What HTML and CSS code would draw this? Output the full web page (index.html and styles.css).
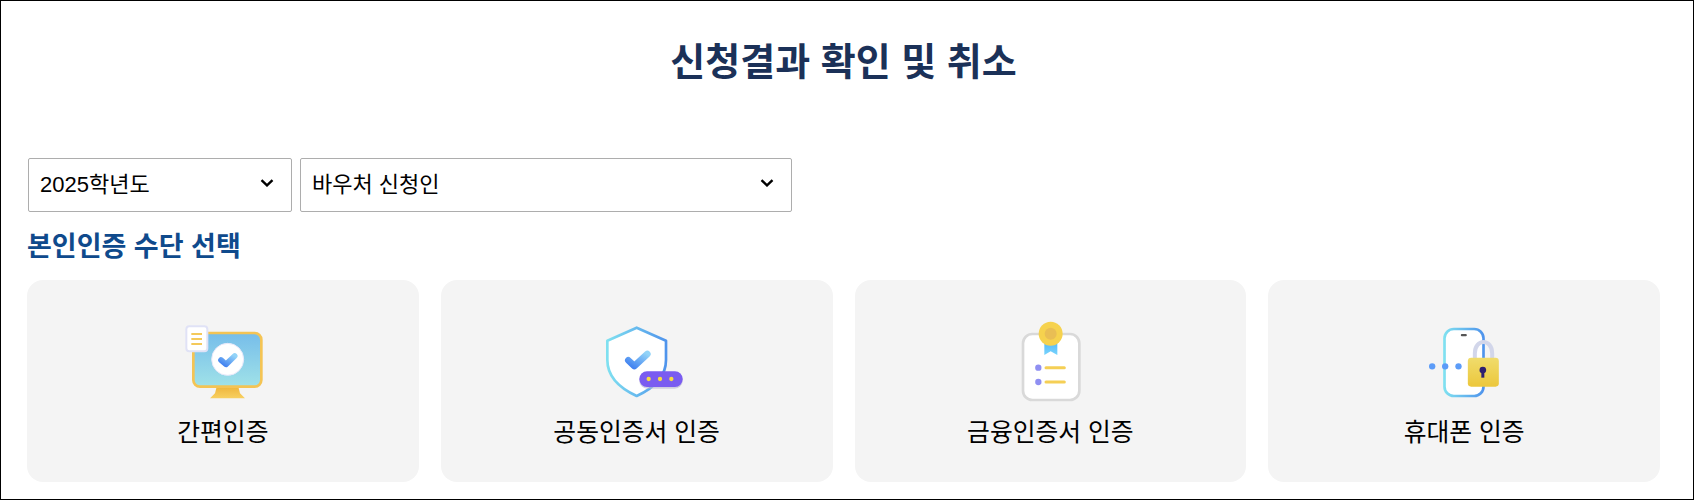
FILE: index.html
```html
<!DOCTYPE html>
<html lang="ko">
<head>
<meta charset="utf-8">
<title>신청결과 확인 및 취소</title>
<link rel="stylesheet" href="styles.css">
</head>
<body>
<main class="page">
  <h1 class="title">신청결과 확인 및 취소</h1>
  <div class="filters">
    <div class="field field-year">
      <select class="select"><option>2025학년도</option></select>
      <svg class="chevron" width="14" height="8" viewBox="0 0 14 8"><path d="M1.5 1.2L7 6.4L12.5 1.2" fill="none" stroke="#000" stroke-width="2.4"/></svg>
    </div>
    <div class="field field-role">
      <select class="select"><option>바우처 신청인</option></select>
      <svg class="chevron" width="14" height="8" viewBox="0 0 14 8"><path d="M1.5 1.2L7 6.4L12.5 1.2" fill="none" stroke="#000" stroke-width="2.4"/></svg>
    </div>
  </div>
  <h2 class="subtitle">본인인증 수단 선택</h2>
  <svg class="defs" width="0" height="0" aria-hidden="true">
    <defs>
      <linearGradient id="screen" x1="0" y1="0" x2="0" y2="1"><stop offset="0" stop-color="#76bdea"/><stop offset="1" stop-color="#a0e2e8"/></linearGradient>
      <linearGradient id="stand" x1="0" y1="0" x2="0" y2="1"><stop offset="0" stop-color="#eeb53c"/><stop offset="1" stop-color="#f8d060"/></linearGradient>
      <linearGradient id="check" x1="0" y1="1" x2="1" y2="0"><stop offset="0" stop-color="#3f7ff0"/><stop offset="1" stop-color="#93d4f8"/></linearGradient>
      <linearGradient id="edge" x1="0" y1="0" x2="1" y2="0"><stop offset="0" stop-color="#7fe0f0"/><stop offset="1" stop-color="#4f94ec"/></linearGradient>
      <linearGradient id="padlock" x1="0" y1="0" x2="0" y2="1"><stop offset="0" stop-color="#f0dc6c"/><stop offset="1" stop-color="#ecc73c"/></linearGradient>
      <linearGradient id="ribbon" x1="0" y1="0" x2="0" y2="1"><stop offset="0" stop-color="#4fb4fa"/><stop offset="1" stop-color="#78d4fc"/></linearGradient>
    </defs>
  </svg>
  <div class="methods">
    <a class="method">
      <svg class="icon" width="120" height="100" viewBox="9 0 360 300">
        <path d="M170 230H235L240 250L255 265H150L165 250Z" fill="url(#stand)"/>
        <rect x="100" y="69" width="204" height="161" rx="20" fill="url(#screen)" stroke="#f4c454" stroke-width="8"/>
        <circle cx="203" cy="148" r="48" fill="#fff" stroke="#e8e8fa" stroke-width="3"/>
        <path d="M183 150L198 163L224 138" fill="none" stroke="url(#check)" stroke-width="17" stroke-linecap="round" stroke-linejoin="round"/>
        <rect x="79" y="49" width="63" height="75" rx="9" fill="#fff" stroke="#e0e2f6" stroke-width="6"/>
        <path d="M94 72H126M94 87H126M94 102H126" stroke="#f4c95a" stroke-width="6"/>
      </svg>
      <span class="label">간편인증</span>
    </a>
    <a class="method">
      <svg class="icon" width="120" height="100" viewBox="-39 0 360 300">
        <path d="M140 53L228 92V150C228 200 190 235 140 258C90 235 52 200 52 150V92Z" fill="#fff" stroke="url(#edge)" stroke-width="8" stroke-linejoin="round"/>
        <path d="M115 151L133 168L172 132" fill="none" stroke="url(#check)" stroke-width="20" stroke-linecap="round" stroke-linejoin="round"/>
        <rect x="148" y="188" width="130" height="48" rx="24" fill="#b8b4d0" opacity=".6"/>
        <rect x="148" y="184" width="130" height="47" rx="23" fill="#7a5cf0"/>
        <circle cx="176" cy="207" r="6.5" fill="#f8dc40"/><circle cx="210" cy="207" r="6.5" fill="#f8dc40"/><circle cx="244" cy="207" r="6.5" fill="#f8dc40"/>
      </svg>
      <span class="label">공동인증서 인증</span>
    </a>
    <a class="method">
      <svg class="icon" width="120" height="100" viewBox="-27 0 360 300">
        <rect x="72" y="72" width="169" height="198" rx="28" fill="#fff" stroke="#d9d9d9" stroke-width="8"/>
        <path d="M136 90H175V135L155 124L136 135Z" fill="url(#ribbon)"/>
        <circle cx="155" cy="71" r="36" fill="#f6d24e"/>
        <circle cx="155" cy="71" r="18" fill="#e9be54"/>
        <circle cx="118" cy="173" r="9.5" fill="#8f8ff2"/><circle cx="118" cy="216" r="9.5" fill="#8f8ff2"/>
        <path d="M141 173H196M141 216H196" stroke="#f5cf55" stroke-width="9" stroke-linecap="round"/>
      </svg>
      <span class="label">금융인증서 인증</span>
    </a>
    <a class="method">
      <svg class="icon" width="120" height="100" viewBox="-46.5 0 360 300">
        <rect x="75" y="57" width="117" height="201" rx="28" fill="#fff" stroke="url(#edge)" stroke-width="8"/>
        <rect x="124" y="72" width="18" height="7" rx="3" fill="#555"/>
        <circle cx="38" cy="169" r="9.5" fill="#5c9cf8"/><circle cx="77" cy="169" r="9.5" fill="#5c9cf8"/><circle cx="117" cy="169" r="9.5" fill="#5c9cf8"/>
        <path d="M166 150V130C166 85 218 85 218 130V150" fill="none" stroke="#d2d6ea" stroke-width="12"/>
        <rect x="145" y="143" width="93" height="87" rx="10" fill="url(#padlock)"/>
        <circle cx="190" cy="180" r="10" fill="#2f2070"/>
        <path d="M190 180V203" stroke="#2f2070" stroke-width="9"/>
      </svg>
      <span class="label">휴대폰 인증</span>
    </a>
  </div>
</main>
</body>
</html>
```
FILE: styles.css
```css
* { box-sizing: border-box; }
html, body { margin: 0; padding: 0; background: #fff; }
body { font-family: "Liberation Sans", "Noto Sans CJK KR", sans-serif; color: #000; }
.page { width: 1694px; height: 500px; border: 1px solid #000; padding: 0 33px 0 26px; overflow: hidden; }
.title { margin: 37px 0 0; height: 48px; line-height: 48px; font-size: 38px; font-weight: 700; text-align: center; color: #1b3158; }
.filters { display: flex; gap: 8px; margin: 72px 0 0 1px; }
.field { position: relative; height: 54px; }
.field-year { width: 264px; }
.field-role { width: 492px; }
.select { display: block; width: 100%; height: 100%; padding: 0 11px 2px; appearance: none; font: 22px "Liberation Sans", "Noto Sans CJK KR", sans-serif; color: #000; background: #fff; border: 1px solid #adadad; border-radius: 2px; }
.chevron { position: absolute; top: 21px; right: 18px; pointer-events: none; }
.subtitle { margin: 15px 0 0; height: 40px; line-height: 40px; font-size: 27px; font-weight: 700; color: #0f4a8c; }
.defs { position: absolute; }
.methods { display: grid; grid-template-columns: repeat(4, 1fr); gap: 22px; margin-top: 13px; }
.method { display: flex; flex-direction: column; align-items: center; height: 202px; padding-top: 30px; background: #f4f4f4; border-radius: 16px; }
.icon { display: block; filter: blur(0.4px); }
.label { margin-top: 5px; line-height: 36px; font-size: 24.8px; }
```
